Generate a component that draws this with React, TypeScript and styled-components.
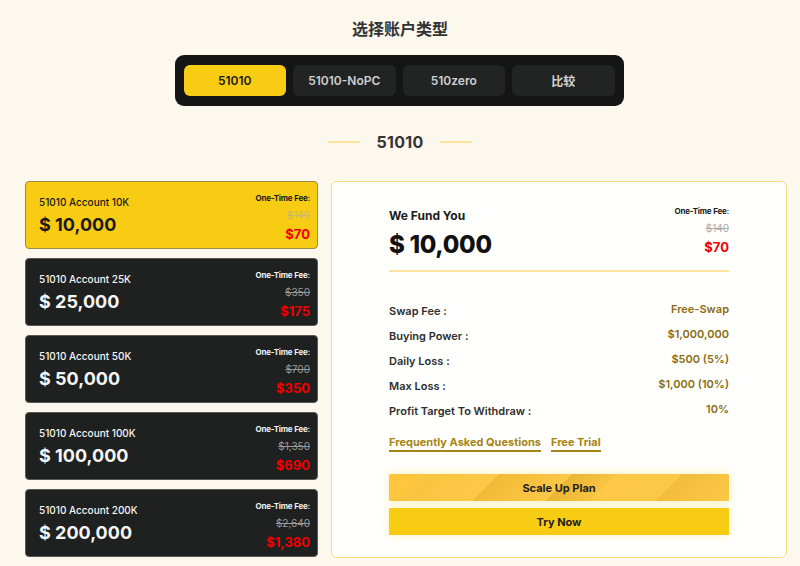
import React from "react";
import styled, { createGlobalStyle } from "styled-components";

const GlobalStyle = createGlobalStyle`
  html, body { margin: 0; padding: 0; background: #fdf8ee; }
  body { font-family: Inter, "Noto Sans", "Noto Sans CJK SC", sans-serif; color: #333; }
  * { box-sizing: border-box; }
`;

const Page = styled.div`
  width: 800px;
  height: 566px;
  overflow: hidden;
  background: #fdf8ee;
  display: flex;
  flex-direction: column;
  align-items: center;
`;

const Title = styled.h1`
  margin: 17px 0 0;
  font-size: 16px;
  line-height: 22px;
  font-weight: 700;
  color: #333;
  font-family: "Noto Sans CJK SC", sans-serif;
`;

const TabBar = styled.div`
  margin-top: 16px;
  width: 449px;
  height: 51px;
  background: #151515;
  border-radius: 9px;
  padding: 10px 9px;
  display: grid;
  grid-template-columns: repeat(4, 1fr);
  gap: 7px;
  transform: translateX(-1px);
`;

const Tab = styled.div<{ $active?: boolean }>`
  border-radius: 6px;
  background: ${(p) => (p.$active ? "#f9cc14" : "#222323")};
  color: ${(p) => (p.$active ? "#1a1a1a" : "#cfcfcf")};
  font-size: 12px;
  font-weight: 600;
  display: flex;
  align-items: center;
  justify-content: center;
  font-family: Inter, "Noto Sans CJK SC", sans-serif;
`;

const SectionHead = styled.div`
  margin-top: 25px;
  display: flex;
  align-items: center;
  gap: 16px;
  height: 22px;
`;

const HeadLine = styled.span`
  width: 32px;
  height: 2px;
  background: #fde49a;
`;

const HeadText = styled.span`
  font-size: 16px;
  font-weight: 700;
  color: #333;
  letter-spacing: 0.3px;
`;

const Main = styled.div`
  margin-top: 28px;
  width: 800px;
  padding: 0 13px 0 25px;
  display: grid;
  grid-template-columns: 293px 1fr;
  gap: 13px;
  align-items: start;
`;

const CardList = styled.div`
  display: flex;
  flex-direction: column;
  gap: 9px;
`;

const Card = styled.div<{ $active?: boolean }>`
  height: 68px;
  border-radius: 4px;
  background: ${(p) => (p.$active ? "#f9cc14" : "#1f2020")};
  border: 1px solid ${(p) => (p.$active ? "#9c8a4a" : "#5a5a52")};
  color: ${(p) => (p.$active ? "#1a1a1a" : "#f5f5f5")};
  padding: 0 7px 0 13px;
  display: flex;
  justify-content: space-between;
  align-items: stretch;
`;

const CardLeft = styled.div`
  display: flex;
  flex-direction: column;
  justify-content: center;
  padding-top: 2px;
`;

const CardName = styled.div`
  font-size: 10px;
  font-weight: 500;
  line-height: 14px;
`;

const CardAmount = styled.div`
  font-size: 18px;
  font-weight: 700;
  line-height: 24px;
  margin-top: 4px;
`;

const FeeBox = styled.div`
  display: flex;
  flex-direction: column;
  align-items: flex-end;
  padding-top: 11px;
`;

const FeeLabel = styled.div<{ $dark?: boolean }>`
  font-size: 8px;
  font-weight: 700;
  line-height: 11px;
  letter-spacing: -0.2px;
  color: ${(p) => (p.$dark ? "#1a1a1a" : "#f0f0f0")};
`;

const OldPrice = styled.div<{ $tone: string }>`
  margin-top: 5px;
  font-size: 10px;
  line-height: 13px;
  color: ${(p) => p.$tone};
  text-decoration: line-through;
`;

const NewPrice = styled.div`
  margin-top: 4px;
  font-size: 13px;
  line-height: 16px;
  font-weight: 700;
  color: #f00000;
`;

const Panel = styled.div`
  height: 377px;
  background: #fffffd;
  border: 1.5px solid #f8dd80;
  border-radius: 6px;
  padding: 0 57px;
  display: flex;
  flex-direction: column;
`;

const PanelTop = styled.div`
  display: flex;
  justify-content: space-between;
  padding-top: 24px;
  padding-bottom: 10px;
  border-bottom: 2px solid #fbe59c;
`;

const FundLabel = styled.div`
  font-size: 12px;
  font-weight: 700;
  line-height: 16px;
  color: #1a1a1a;
  margin-top: 2px;
`;

const FundAmount = styled.div`
  font-size: 24px;
  font-weight: 800;
  line-height: 30px;
  color: #111;
  margin-top: 6px;
  letter-spacing: -0.3px;
`;

const PanelFee = styled.div`
  display: flex;
  flex-direction: column;
  align-items: flex-end;
`;

const Rows = styled.div`
  margin-top: 30px;
  display: flex;
  flex-direction: column;
  gap: 9px;
`;

const Row = styled.div`
  display: flex;
  justify-content: space-between;
  align-items: center;
  height: 16px;
  font-size: 11px;
  font-weight: 600;
`;

const RowLabel = styled.span`
  color: #2e2e2e;
  margin-top: 2px;
`;

const RowValue = styled.span`
  color: #8a6c12;
  margin-top: -2px;
`;

const Links = styled.div`
  margin-top: 17px;
  display: flex;
  gap: 10px;
`;

const LinkText = styled.a`
  font-size: 11px;
  font-weight: 700;
  color: #a88412;
  text-decoration: none;
  padding-bottom: 1px;
  border-bottom: 2px solid #a88412;
  line-height: 14px;
`;

const Buttons = styled.div`
  margin-top: 22px;
  display: flex;
  flex-direction: column;
  gap: 7px;
`;

const Button = styled.div<{ $pattern?: boolean }>`
  height: 27px;
  display: flex;
  align-items: center;
  justify-content: center;
  font-size: 11px;
  font-weight: 700;
  color: #222;
  border-radius: 1px;
  box-shadow: 0 0 10px rgba(249, 204, 20, 0.3);
  background: ${(p) =>
    p.$pattern
      ? "linear-gradient(135deg, #fdc63c 0%, #fdc63c 10%, #f9c540 10%, #fcc846 30%, #f1ba36 30%, #fdc846 50%, #eab534 50%, #f8c442 62%, #fdc946 62%, #fbc845 80%, #f3bd3c 80%, #fdc847 100%)"
      : "#f9cc14"};
`;

const cards = [
  { name: "51010 Account 10K", amount: "$ 10,000", old: "$140", price: "$70", active: true },
  { name: "51010 Account 25K", amount: "$ 25,000", old: "$350", price: "$175" },
  { name: "51010 Account 50K", amount: "$ 50,000", old: "$700", price: "$350" },
  { name: "51010 Account 100K", amount: "$ 100,000", old: "$1,350", price: "$690" },
  { name: "51010 Account 200K", amount: "$ 200,000", old: "$2,640", price: "$1,380" },
];

const rows = [
  ["Swap Fee :", "Free-Swap"],
  ["Buying Power :", "$1,000,000"],
  ["Daily Loss :", "$500 (5%)"],
  ["Max Loss :", "$1,000 (10%)"],
  ["Profit Target To Withdraw :", "10%"],
];

export default function App() {
  return (
    <Page>
      <GlobalStyle />
      <Title>选择账户类型</Title>
      <TabBar>
        <Tab $active>51010</Tab>
        <Tab>51010-NoPC</Tab>
        <Tab>510zero</Tab>
        <Tab>比较</Tab>
      </TabBar>
      <SectionHead>
        <HeadLine />
        <HeadText>51010</HeadText>
        <HeadLine />
      </SectionHead>
      <Main>
        <CardList>
          {cards.map((c) => (
            <Card key={c.name} $active={c.active}>
              <CardLeft>
                <CardName>{c.name}</CardName>
                <CardAmount>{c.amount}</CardAmount>
              </CardLeft>
              <FeeBox>
                <FeeLabel $dark={c.active}>One-Time Fee:</FeeLabel>
                <OldPrice $tone={c.active ? "#c9b670" : "#9a9a9a"}>{c.old}</OldPrice>
                <NewPrice>{c.price}</NewPrice>
              </FeeBox>
            </Card>
          ))}
        </CardList>
        <Panel>
          <PanelTop>
            <div>
              <FundLabel>We Fund You</FundLabel>
              <FundAmount>$ 10,000</FundAmount>
            </div>
            <PanelFee>
              <FeeLabel $dark>One-Time Fee:</FeeLabel>
              <OldPrice $tone="#aaa">$140</OldPrice>
              <NewPrice>$70</NewPrice>
            </PanelFee>
          </PanelTop>
          <Rows>
            {rows.map(([l, v]) => (
              <Row key={l}>
                <RowLabel>{l}</RowLabel>
                <RowValue>{v}</RowValue>
              </Row>
            ))}
          </Rows>
          <Links>
            <LinkText>Frequently Asked Questions</LinkText>
            <LinkText>Free Trial</LinkText>
          </Links>
          <Buttons>
            <Button $pattern>Scale Up Plan</Button>
            <Button>Try Now</Button>
          </Buttons>
        </Panel>
      </Main>
    </Page>
  );
}
